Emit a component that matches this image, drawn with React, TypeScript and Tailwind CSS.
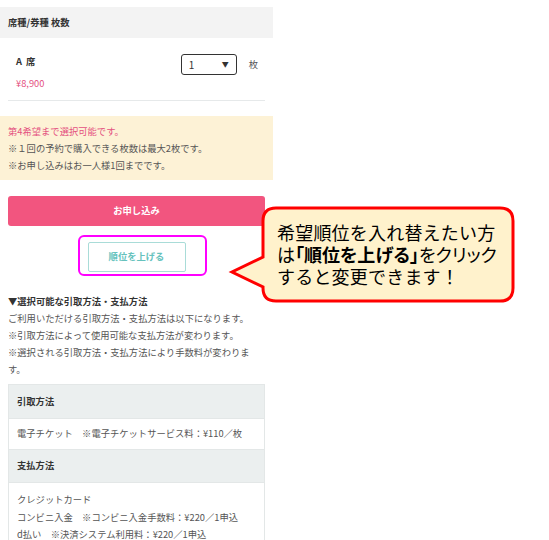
const notes = [
  { text: "第4希望まで選択可能です。", pink: true },
  { text: "※１回の予約で購入できる枚数は最大2枚です。" },
  { text: "※お申し込みはお一人様1回までです。" },
];

const methodNotes = [
  "ご利用いただける引取方法・支払方法は以下になります。",
  "※引取方法によって使用可能な支払方法が変わります。",
  "※選択される引取方法・支払方法により手数料が変わりま",
  "す。",
];

const payments = [
  "クレジットカード",
  "コンビニ入金　※コンビニ入金手数料：¥220／1申込",
  "d払い　※決済システム利用料：¥220／1申込",
];

function Callout() {
  return (
    <div className="absolute left-[228px] top-[204px] w-[290px] h-[102px]">
      <svg width="290" height="102" viewBox="0 0 290 102" className="absolute inset-0">
        <path
          d="M48 4 H272 Q285 4 285 17 V84 Q285 97 272 97 H48 Q35 97 35 84 V83 L4 68 L35 53 V17 Q35 4 48 4 Z"
          fill="#fff2cc"
          stroke="#ff0000"
          strokeWidth="3"
        />
      </svg>
      <div className="absolute left-[49px] top-[17px] text-[18px] leading-[22px] text-black whitespace-nowrap tracking-[0.2px]">
        <div>希望順位を入れ替えたい方</div>
        <div className="[font-feature-settings:'palt'] tracking-[0px]">
          は<span className="font-bold">「順位を上げる」</span>をクリック
        </div>
        <div>すると変更できます！</div>
      </div>
    </div>
  );
}

export default function App() {
  return (
    <div
      className="relative w-[549px] h-[540px] bg-white overflow-hidden"
      style={{ fontFamily: '"Noto Sans CJK JP", "Noto Sans", sans-serif' }}
    >
      <div className="w-[273px] pt-[7px] text-[9.3px] text-[#555]">
        <div className="h-[31px] bg-[#f3f3f3] flex items-center px-2 font-bold text-[#333]">
          席種/券種 枚数
        </div>

        <div className="mx-2 border-b border-[#e6e9ea] pt-[16px] pb-[10px] pl-2 pr-[7px] flex justify-between">
          <div>
            <div className="leading-[14px] text-[#333] font-bold tracking-[1px]">A 席</div>
            <div className="mt-[8px] leading-[14px] text-[#e4507f]">¥8,900</div>
          </div>
          <div className="flex items-center self-start gap-[12px]">
            <div className="w-[56px] h-[21px] border-[1.5px] border-[#333] rounded-[3px] flex items-center justify-between px-[7px] text-[#333]">
              <span className="text-[10px]">1</span>
              <span className="text-[7px]">▼</span>
            </div>
            <span>枚</span>
          </div>
        </div>

        <div className="mt-[15px] bg-[#fdf2d6] pt-[7px] pb-[6px] px-2">
          {notes.map((n) => (
            <div key={n.text} className={"leading-[17px] " + (n.pink ? "text-[#e4507f]" : "")}>
              {n.text}
            </div>
          ))}
        </div>

        <div className="mx-2 mt-[16px] h-[30px] rounded-[3px] bg-[#f2557f] flex items-center justify-center text-white font-bold">
          お申し込み
        </div>

        <div className="mt-[16px] flex justify-center">
          <div className="relative">
            <div className="w-[98px] h-[30px] border border-[#a9dcd8] rounded-[2px] flex items-center justify-center font-bold text-[#66c2bd]">
              順位を上げる
            </div>
            <div className="absolute left-[-10px] right-[-21px] top-[-7px] bottom-[-4px] border-[2.5px] border-[#ff00ff] rounded-[6px]" />
          </div>
        </div>

        <div className="mt-[21px] px-2">
          <div className="leading-[17px] font-bold text-[#333]">▼選択可能な引取方法・支払方法</div>
          {methodNotes.map((t) => (
            <div key={t} className="leading-[17px]">
              {t}
            </div>
          ))}
        </div>

        <div className="mx-2 mt-[6px] border border-[#e3e7e7] bg-[#ebefef]">
          <div className="h-[33px] flex items-center px-2 font-bold text-[#333]">引取方法</div>
          <div className="h-[32px] flex items-center px-2 bg-white border-y border-[#e3e7e7]">
            電子チケット　※電子チケットサービス料：¥110／枚
          </div>
          <div className="h-[32px] flex items-center px-2 font-bold text-[#333]">支払方法</div>
          <div className="bg-white border-t border-[#e3e7e7] px-2 pt-[8px] pb-[8px]">
            {payments.map((p) => (
              <div key={p} className="leading-[17.5px] whitespace-nowrap">
                {p}
              </div>
            ))}
          </div>
        </div>
      </div>

      <Callout />
    </div>
  );
}
